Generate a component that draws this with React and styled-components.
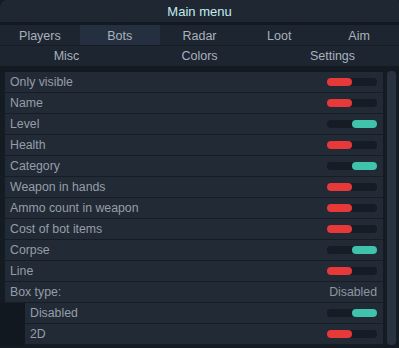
import React from "react";
import styled, { createGlobalStyle } from "styled-components";

const Global = createGlobalStyle`
  html, body { margin: 0; padding: 0; background: #151b23; }
  * { box-sizing: border-box; }
`;

const Window = styled.div`
  width: 399px;
  height: 348px;
  overflow: hidden;
  background: #151b23;
  font-family: "Liberation Sans", Arial, sans-serif;
  display: flex;
  flex-direction: column;
`;

const TitleBar = styled.div`
  height: 22px;
  background: #1f2733;
  border-top-left-radius: 7px;
  border-top-right-radius: 2px;
  color: #c3ecef;
  font-size: 13px;
  display: flex;
  align-items: center;
  justify-content: center;
  padding-top: 1px;
  flex-shrink: 0;
`;

const TitleGap = styled.div`
  height: 3px;
  background: #131922;
  flex-shrink: 0;
`;

const TabRow = styled.div`
  display: grid;
  grid-template-columns: repeat(${(p) => p.$cols}, 1fr);
  height: ${(p) => p.$h}px;
  background: #1d2531;
  border-bottom: 1px solid ${(p) => p.$line};
  flex-shrink: 0;
`;

const Tab = styled.div`
  display: flex;
  align-items: center;
  justify-content: center;
  color: #a9b2bc;
  font-size: 12.5px;
  padding-top: 1px;
  background: ${(p) => (p.$active ? "#243040" : "transparent")};
`;

const Spacer = styled.div`
  height: 6px;
  background: #141a22;
  flex-shrink: 0;
`;

const Body = styled.div`
  flex: 1;
  display: flex;
  padding-left: 5px;
  gap: 4px;
  min-height: 0;
`;

const List = styled.div`
  width: 378px;
  display: flex;
  flex-direction: column;
`;

const Row = styled.div`
  height: 21px;
  flex-shrink: 0;
  display: flex;
  align-items: center;
  justify-content: space-between;
  background: #222a36;
  border-bottom: 1px solid #171d26;
  padding: 0 6px 0 5px;
  margin-left: ${(p) => (p.$sub ? 20 : 0)}px;
  color: #959ea8;
  font-size: 12.3px;
`;

const SubBlock = styled.div`
  display: flex;
  flex-direction: column;
  margin-left: -5px;
  padding-left: 5px;
  background: #121820;
`;

const ValueText = styled.span`
  color: #8d969f;
  font-size: 12.3px;
`;

const Track = styled.div`
  width: 50px;
  height: 8px;
  border-radius: 4px;
  background: #161c25;
  display: flex;
  justify-content: ${(p) => (p.$on ? "flex-end" : "flex-start")};
`;

const Knob = styled.div`
  width: 25px;
  height: 8px;
  border-radius: 4px;
  background: ${(p) => (p.$on ? "#3fc3ad" : "#e8393a")};
`;

const Scrollbar = styled.div`
  width: 9px;
  margin-top: -1px;
  margin-bottom: 3px;
  border-radius: 4px;
  background: #29323f;
`;

const Toggle = ({ on }) => (
  <Track $on={on}>
    <Knob $on={on} />
  </Track>
);

const items = [
  ["Only visible", false],
  ["Name", false],
  ["Level", true],
  ["Health", false],
  ["Category", true],
  ["Weapon in hands", false],
  ["Ammo count in weapon", false],
  ["Cost of bot items", false],
  ["Corpse", true],
  ["Line", false],
];

export default function App() {
  return (
    <>
      <Global />
      <Window>
        <TitleBar>Main menu</TitleBar>
        <TitleGap />
        <TabRow $cols={5} $h={21} $line="#161c25">
          {["Players", "Bots", "Radar", "Loot", "Aim"].map((t) => (
            <Tab key={t} $active={t === "Bots"}>
              {t}
            </Tab>
          ))}
        </TabRow>
        <TabRow $cols={3} $h={20} $line="#1d2531">
          {["Misc", "Colors", "Settings"].map((t) => (
            <Tab key={t}>{t}</Tab>
          ))}
        </TabRow>
        <Spacer />
        <Body>
          <List>
            {items.map(([label, on]) => (
              <Row key={label}>
                <span>{label}</span>
                <Toggle on={on} />
              </Row>
            ))}
            <Row>
              <span>Box type:</span>
              <ValueText>Disabled</ValueText>
            </Row>
            <SubBlock>
              <Row $sub>
                <span>Disabled</span>
                <Toggle on />
              </Row>
              <Row $sub>
                <span>2D</span>
                <Toggle on={false} />
              </Row>
            </SubBlock>
          </List>
          <Scrollbar />
        </Body>
      </Window>
    </>
  );
}
